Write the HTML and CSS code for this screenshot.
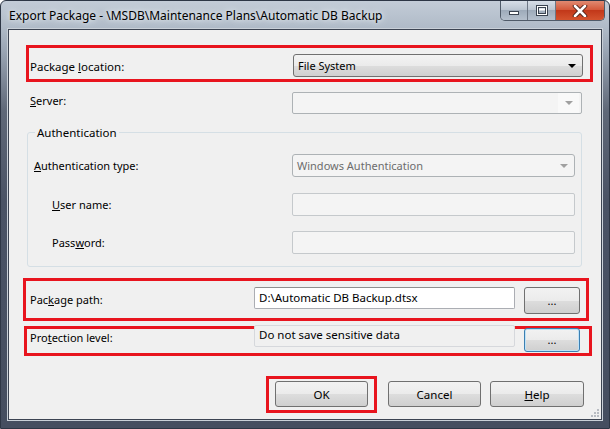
FILE: index.html
```html
<!DOCTYPE html>
<html lang="en">
<head>
    <meta charset="UTF-8">
    <title>Export Package</title>
    <link rel="stylesheet" href="styles.css">
</head>
<body>
    <div class="window">
        <div class="titlebar">
            <div class="title">Export Package - \MSDB\Maintenance Plans\Automatic DB Backup</div>
            <div class="caption-buttons">
                <div class="cap cap-min">
                    <svg width="12" height="6" viewBox="0 0 12 6"><rect x="1.5" y="1.5" width="9" height="3" fill="#fff" stroke="#3a4350"/></svg>
                </div>
                <div class="cap cap-max">
                    <svg width="12" height="11" viewBox="0 0 12 11"><rect x="1.5" y="1.5" width="9" height="8" fill="none" stroke="#3a4350" stroke-width="3"/><rect x="1.5" y="1.5" width="9" height="8" fill="none" stroke="#fff" stroke-width="1"/><rect x="3" y="3.5" width="6" height="2" fill="#fff"/></svg>
                </div>
                <div class="cap cap-close">
                    <svg width="16" height="12" viewBox="0 0 16 12"><path d="M3 1 L13 11 M13 1 L3 11" stroke="#4a2018" stroke-width="4.5" stroke-linecap="round"/><path d="M3 1 L13 11 M13 1 L3 11" stroke="#fff" stroke-width="2.6" stroke-linecap="round"/></svg>
                </div>
            </div>
        </div>

        <div class="content">
            <div class="mark mark-location">
                <label class="lbl lbl-location">Package <u>l</u>ocation:</label>
                <div class="combo combo-active">
                    <span>File System</span>
                    <span class="arrow"></span>
                </div>
            </div>

            <div class="row row-server">
                <label class="lbl lbl-server"><u>S</u>erver:</label>
                <div class="combo combo-disabled combo-server">
                    <span></span>
                    <span class="arrow-box"><span class="arrow arrow-grey"></span></span>
                </div>
            </div>

            <fieldset class="group">
                <legend>Authentication</legend>
                <div class="row row-authtype">
                    <label class="lbl lbl-authtype"><u>A</u>uthentication type:</label>
                    <div class="combo combo-disabled combo-auth">
                        <span class="grey-text">Windows Authentication</span>
                        <span class="arrow arrow-grey"></span>
                    </div>
                </div>
                <div class="row row-user">
                    <label class="lbl lbl-indent"><u>U</u>ser name:</label>
                    <div class="textbox textbox-disabled textbox-auth"></div>
                </div>
                <div class="row row-password">
                    <label class="lbl lbl-indent">Pass<u>w</u>ord:</label>
                    <div class="textbox textbox-disabled textbox-auth"></div>
                </div>
            </fieldset>

            <div class="mark mark-path">
                <label class="lbl lbl-path">Pac<u>k</u>age path:</label>
                <div class="textbox textbox-path">D:\Automatic DB Backup.dtsx</div>
                <button class="btn btn-browse">...</button>
            </div>

            <div class="mark mark-protection">
                <label class="lbl lbl-protection">Pro<u>t</u>ection level:</label>
                <div class="textbox textbox-readonly">Do not save sensitive data</div>
                <button class="btn btn-browse btn-focus">...</button>
            </div>

            <div class="footer">
                <div class="mark mark-ok">
                    <button class="btn btn-dialog">OK</button>
                </div>
                <button class="btn btn-dialog btn-cancel">Cancel</button>
                <button class="btn btn-dialog btn-help"><u>H</u>elp</button>
            </div>

            <svg class="grip" width="8" height="8" viewBox="0 0 8 8">
                <g fill="#b8bcc2">
                    <rect x="6" y="0" width="2" height="2"/>
                    <rect x="3" y="3" width="2" height="2"/>
                    <rect x="6" y="3" width="2" height="2"/>
                    <rect x="0" y="6" width="2" height="2"/>
                    <rect x="3" y="6" width="2" height="2"/>
                    <rect x="6" y="6" width="2" height="2"/>
                </g>
            </svg>
        </div>
    </div>
</body>
</html>
```

FILE: styles.css
```css
* {
    box-sizing: border-box;
}
body {
    margin: 0;
    font-family: 'Noto Sans', 'Segoe UI', sans-serif;
    font-size: 11px;
    color: #000;
}
u {
    text-decoration: underline;
    text-underline-offset: 1px;
}
.window {
    width: 610px;
    height: 429px;
    padding: 0 7px 8px 7px;
    display: flex;
    flex-direction: column;
    border: 1px solid #2d3645;
    border-radius: 6px 6px 0 0;
    background: linear-gradient(to bottom, #c3ccd7 0, #b0bbc8 26px, #9aa5b4 50px, #5f6878 110px, #4a5365 200px, #454e60 100%);
}
.titlebar {
    height: 28px;
    display: flex;
    justify-content: space-between;
    align-items: flex-start;
    margin: 0 -3px 0 -6px;
}
.title {
    padding: 6px 0 0 7px;
    font-size: 12px;
    color: #000;
    white-space: nowrap;
    text-shadow: 0 0 8px #e8edf2, 0 0 4px #e8edf2;
}
.caption-buttons {
    display: flex;
    height: 20px;
    border: 1px solid #4f5a68;
    border-top: none;
    border-radius: 0 0 5px 5px;
    overflow: hidden;
}
.cap {
    height: 19px;
    display: flex;
    align-items: center;
    justify-content: center;
}
.cap-min {
    width: 27px;
    border-right: 1px solid #6d7785;
    background: linear-gradient(to bottom, #d7dee7 0, #bcc6d2 45%, #9eabba 50%, #b5c0cd 100%);
    padding-top: 5px;
}
.cap-max {
    width: 28px;
    border-right: 1px solid #6d7785;
    background: linear-gradient(to bottom, #d7dee7 0, #bcc6d2 45%, #9eabba 50%, #b5c0cd 100%);
}
.cap-close {
    width: 48px;
    background: linear-gradient(to bottom, #e08a72 0, #d45a3c 45%, #c2381a 50%, #d4532e 100%);
}
.content {
    position: relative;
    flex: 1;
    background: #f0f0f0;
    border: 1px solid #3c4452;
    box-shadow: 0 0 0 1px #c9d0d8;
    display: flex;
    flex-direction: column;
    align-items: flex-start;
}
.mark {
    border: 3px solid #e8141e;
    display: flex;
    align-items: flex-start;
}
.lbl {
    flex-shrink: 0;
    line-height: 18px;
}
.row {
    display: flex;
    align-items: center;
}
.combo {
    display: flex;
    justify-content: space-between;
    align-items: center;
    border-radius: 3px;
    padding-left: 4px;
    line-height: 18px;
}
.combo-active {
    width: 290px;
    height: 23px;
    border: 1px solid #707070;
    background: linear-gradient(to bottom, #f3f3f3 0, #ebebeb 50%, #dddddd 51%, #d0d0d0 100%);
}
.combo-disabled {
    height: 23px;
    border: 1px solid #adb2b5;
    background: #f4f4f4;
}
.arrow {
    width: 0;
    height: 0;
    margin-right: 6px;
    border-left: 4px solid transparent;
    border-right: 4px solid transparent;
    border-top: 4px solid #000;
}
.arrow-grey {
    border-top-color: #a0a0a0;
}
.arrow-box {
    align-self: stretch;
    width: 21px;
    display: flex;
    align-items: center;
    justify-content: flex-end;
    background: #f9f9f9;
}
.grey-text {
    color: #6d6d6d;
}
.textbox {
    height: 22px;
    border: 1px solid #abadb3;
    border-top-color: #8e8f8f;
    border-radius: 2px;
    background: #fff;
    padding: 2px 4px;
    line-height: 16px;
}
.textbox-disabled {
    border-color: #c5c9cc;
    background: #f4f4f4;
}
.btn {
    font-family: inherit;
    font-size: 11px;
    color: #000;
    border: 1px solid #707070;
    border-radius: 3px;
    background: linear-gradient(to bottom, #f2f2f2 0, #ebebeb 50%, #dddddd 51%, #cfcfcf 100%);
    padding: 0;
}

/* package location */
.mark-location {
    margin: 15px 0 0 17px;
    width: 567px;
    height: 37px;
    padding: 6px 0 0 1px;
}
.lbl-location {
    width: 263px;
    margin-top: 4px;
    font-size: 11.5px;
}

/* server */
.row-server {
    margin: 10px 0 0 21px;
}
.lbl-server {
    width: 262px;
    margin-top: -4px;
}
.combo-server {
    width: 290px;
    height: 22px;
    padding-right: 2px;
    border-radius: 2px;
}

/* authentication group */
.group {
    margin: 10px 0 0 18px;
    width: 555px;
    padding: 0 0 12px 0;
    border: 1px solid #d5dfe5;
    border-radius: 3px;
    min-inline-size: 0;
}
.group legend {
    margin-left: 7px;
    padding: 0 2px;
    font-size: 11.5px;
    line-height: 17px;
}
.row-authtype {
    margin: 13px 0 0 6px;
}
.lbl-authtype {
    width: 258px;
}
.combo-auth {
    width: 283px;
}
.row-user {
    margin: 16px 0 0 24px;
}
.row-password {
    margin: 15px 0 0 24px;
}
.lbl-indent {
    width: 240px;
}
.textbox-auth {
    width: 283px;
    height: 23px;
}

/* package path */
.mark-path {
    margin: 11px 0 0 14px;
    width: 566px;
    height: 43px;
    padding: 6px 0 0 4px;
}
.lbl-path {
    width: 224px;
    margin-top: 4px;
}
.textbox-path {
    width: 261px;
    font-size: 11.5px;
}
.btn-browse {
    width: 56px;
    height: 27px;
    margin-left: 9px;
    line-height: 20px;
}

/* protection level */
.mark-protection {
    margin: 5px 0 0 15px;
    width: 568px;
    height: 30px;
    padding: 0 0 0 3px;
}
.lbl-protection {
    width: 224px;
}
.textbox-readonly {
    width: 261px;
    margin-top: -4px;
    background: #f0f0f0;
    border-color: #d6d8dc;
    padding-top: 1px;
    font-size: 11.5px;
}
.btn-focus {
    margin-top: -1px;
    height: 24px;
    border-color: #3c7fb1;
    box-shadow: inset 0 0 0 1px #c0e2f7;
}

/* dialog buttons */
.footer {
    align-self: stretch;
    display: flex;
    justify-content: flex-end;
    align-items: flex-start;
    margin-top: 20px;
    padding-right: 17px;
}
.mark-ok {
    width: 111px;
    height: 37px;
    padding: 2px 6px 0 6px;
    margin-right: 11px;
}
.btn-dialog {
    width: 93px;
    height: 26px;
    font-size: 11.5px;
}
.btn-cancel {
    margin-top: 5px;
    margin-right: 9px;
}
.btn-help {
    margin-top: 5px;
    width: 94px;
}
.grip {
    position: absolute;
    right: 2px;
    bottom: 2px;
}
```
